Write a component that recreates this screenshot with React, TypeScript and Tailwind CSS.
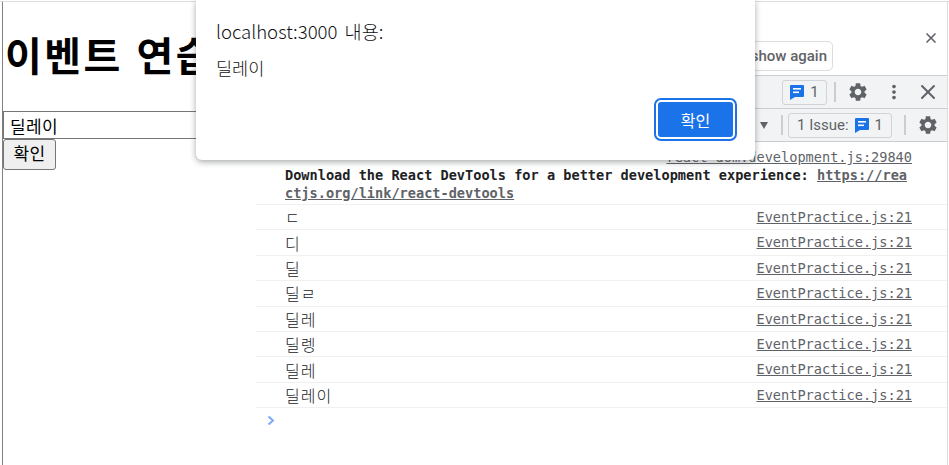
import { X } from "lucide-react";
import { MdSettings, MdMoreVert } from "react-icons/md";

const logs = ["ㄷ", "디", "딜", "딜ㄹ", "딜레", "딜렝", "딜레", "딜레이"];

const Bubble = () => (
  <svg width="14" height="15" viewBox="0 0 14 15" className="shrink-0">
    <path d="M1 0h12a1 1 0 0 1 1 1v10a1 1 0 0 1-1 1H5l-5 3V1a1 1 0 0 1 1-1z" fill="#1a73e8" />
    <rect x="3" y="3" width="8" height="1.6" fill="#fff" />
    <rect x="3" y="6.5" width="6" height="1.6" fill="#fff" />
  </svg>
);

export default function App() {
  return (
    <div className="relative h-[465px] w-[949px] overflow-hidden bg-white font-['Noto_Sans_CJK_KR','Noto_Sans',sans-serif]">
      <div className="mt-[1px] flex h-[464px] border-t border-t-[#dadce0] pl-[2px] pr-[1px]">
        {/* page */}
        <div className="w-[254px] shrink-0 border-l border-l-[#808080] font-['Liberation_Sans','Noto_Sans_CJK_KR',sans-serif]">
          <h1 className="ml-[2px] mt-[32px] whitespace-nowrap text-[40px] font-bold leading-[46px] tracking-[2.5px] text-black">
            이벤트 연습
          </h1>
          <input
            readOnly
            value="딜레이"
            className="mt-[31px] block h-[28px] w-[300px] border border-[#767676] px-[6px] text-[17px] tracking-[0.4px] text-black"
          />
          <button className="block h-[31px] w-[53px] rounded-[3px] border border-[#767676] bg-[#efefef] text-[17px] tracking-[0.4px] text-black">
            확인
          </button>
        </div>

        {/* devtools */}
        <div className="flex min-w-0 flex-1 flex-col border-r border-r-[#dadce0]">
          <div className="flex h-[73px] shrink-0 items-start justify-end pr-[8px]">
            <div className="mr-[90px] mt-[39px] flex h-[30px] w-[130px] items-center justify-end overflow-hidden whitespace-nowrap rounded-[5px] border border-[#dadce0] pr-[5px] text-[15px] text-[#5f6368]">
              <span className="font-['Roboto',sans-serif] font-medium">Don't show again</span>
            </div>
            <X size={16} strokeWidth={2.5} className="mt-[28px] text-[#5f6368]" />
          </div>

          <div className="flex h-[34px] shrink-0 items-center justify-end border-y border-[#cacdd1] bg-[#f1f3f4] pr-[7px] text-[#5f6368]">
            <div className="flex h-[25px] w-[45px] items-center justify-center gap-[6px] rounded-[3px] border border-[#d0d3d7] text-[15px]">
              <Bubble />
              <span className="font-['Roboto',sans-serif]">1</span>
            </div>
            <div className="ml-[7px] h-[20px] w-[2px] bg-[#cacdd1]" />
            <MdSettings size={22} className="ml-[11px]" />
            <MdMoreVert size={22} className="ml-[14px]" />
            <X size={24} strokeWidth={2} className="ml-[11px]" />
          </div>

          <div className="flex h-[33px] shrink-0 items-center justify-end border-b border-[#cacdd1] bg-[#f1f3f4] pr-[8px] text-[#5f6368]">
            <span className="h-0 w-0 border-x-[4px] border-t-[7px] border-x-transparent border-t-[#5f6368]" />
            <div className="ml-[13px] h-[20px] w-[2px] bg-[#cacdd1]" />
            <div className="ml-[5px] flex h-[25px] w-[104px] items-center justify-center gap-[6px] rounded-[3px] border border-[#d0d3d7] font-['Roboto',sans-serif] text-[15px]">
              <span>1 Issue:</span>
              <Bubble />
              <span>1</span>
            </div>
            <div className="ml-[12px] h-[20px] w-[2px] bg-[#cacdd1]" />
            <MdSettings size={22} className="ml-[11px]" />
          </div>

          <div className="font-['DejaVu_Sans_Mono','Noto_Sans_CJK_KR',monospace] text-[13.6px] text-[#202124]">
            <div className="border-b border-[#f0f0f0] pb-[2px] pl-[29px] pr-[35px] pt-[6px] leading-[18px]">
              <div className="text-right text-[#5f6368] underline">react-dom.development.js:29840</div>
              <div className="font-bold">
                Download the React DevTools for a better development experience:{" "}
                <span className="break-all text-[#5f6368] underline">https://reactjs.org/link/react-devtools</span>
              </div>
            </div>
            {logs.map((text, i) => (
              <div
                key={i}
                className="flex h-[25.4px] items-center justify-between border-b border-[#f0f0f0] pl-[29px] pr-[35px]"
              >
                <span className="font-['Noto_Sans_CJK_KR',monospace] text-[16px] font-light tracking-[1px]">{text}</span>
                <span className="text-[#5f6368] underline">EventPractice.js:21</span>
              </div>
            ))}
            <svg width="10" height="10" viewBox="0 0 10 10" className="ml-[10px] mt-[7px]">
              <path d="M2.5 1.5 7 5.5 2.5 9.5" fill="none" stroke="#7baaf7" strokeWidth="2" />
            </svg>
          </div>
        </div>
      </div>

      {/* alert dialog */}
      <div className="absolute left-[196px] top-0 h-[160px] w-[559px] rounded-b-[6px] bg-white pl-[20px] pr-[20px] font-['Noto_Sans_CJK_KR',sans-serif] font-light text-[#111] shadow-[0_2px_6px_rgba(60,64,67,0.45)]">
        <div className="pt-[19px] text-[18.6px] leading-[24px] [word-spacing:3px]">localhost:3000 내용:</div>
        <div className="mt-[13px] text-[17.5px] leading-[24px]">딜레이</div>
        <div className="mt-[20px] flex justify-end">
          <button className="h-[39px] w-[79px] rounded-[5px] border-2 border-white bg-[#1a73e8] text-[16px] font-normal text-white outline-2 outline-[#1a73e8]">
            확인
          </button>
        </div>
      </div>
    </div>
  );
}
